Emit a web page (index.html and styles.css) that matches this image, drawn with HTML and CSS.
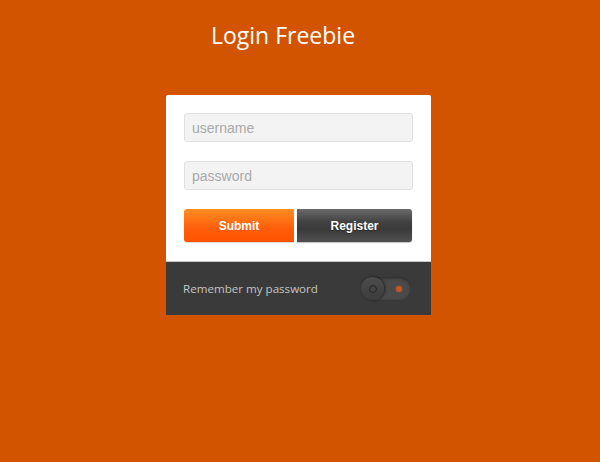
FILE: index.html
```html
<!DOCTYPE html>
<html lang="en">
<head>
  <meta charset="UTF-8" />
  <meta name="viewport" content="width=device-width, initial-scale=1.0"/>
  <title>Login Freebie</title>
  <link rel="stylesheet" href="styles.css">
</head>
<body>
  <div class="page">
    <h1 class="title">Login Freebie</h1>

    <div class="login-card">
      <form class="login-form">
        <input class="field" type="text" placeholder="username">
        <input class="field" type="password" placeholder="password">
        <div class="actions">
          <button type="button" class="btn btn-submit">Submit</button>
          <button type="button" class="btn btn-register">Register</button>
        </div>
      </form>

      <!-- Remember row -->
      <div class="remember">
        <span class="remember-label">Remember my password</span>
        <div class="toggle">
          <span class="toggle-knob"><span class="knob-dot"></span></span>
          <span class="toggle-led"></span>
        </div>
      </div>
    </div>
  </div>
</body>
</html>
```

FILE: styles.css
```css
body {
  margin: 0;
  padding: 0;
  background: #d35400;
  font-family: 'Open Sans', 'Liberation Sans', sans-serif;
  min-height: 462px;
}

.page {
  padding-top: 20px;
}

.title {
  margin: 0;
  text-align: center;
  padding-right: 34px;
  font-size: 23px;
  font-weight: normal;
  color: #fff;
  line-height: 30px;
}

.login-card {
  width: 265px;
  margin: 45px 0 0 166px;
  background: #fff;
  border-radius: 2px 2px 0 0;
  overflow: hidden;
}

.login-form {
  padding: 18px 18px 19px 18px;
  display: flex;
  flex-direction: column;
  gap: 19px;
  border-bottom: 1px solid #c9c9c9;
}

.field {
  box-sizing: border-box;
  width: 229px;
  height: 29px;
  margin: 0;
  padding: 0 7px;
  background: #f3f3f3;
  border: 1px solid #e0e0e0;
  border-radius: 3px;
  font-family: 'Liberation Sans', Arial, sans-serif;
  font-size: 14px;
  color: #555;
  outline: none;
}

.field::placeholder {
  color: #a9a9a9;
}

.actions {
  display: flex;
  gap: 3px;
}

.btn {
  height: 33px;
  border: none;
  padding: 0;
  font-family: 'Liberation Sans', Arial, sans-serif;
  font-size: 12px;
  font-weight: bold;
  color: #fff;
  cursor: pointer;
}

.btn-submit {
  width: 110px;
  border-radius: 3px 0 0 3px;
  background: linear-gradient(to bottom, #ff8d22, #ff5d0a 60%, #ff5200);
  box-shadow: 0 1px 1px rgba(0,0,0,0.15);
}

.btn-register {
  width: 115px;
  border-radius: 0 3px 3px 0;
  background: linear-gradient(to bottom, #6a6a6a, #414141 40%, #3a3a3a 60%, #505050);
  box-shadow: 0 1px 1px rgba(0,0,0,0.25);
  text-shadow: 0 1px 1px rgba(0,0,0,0.4);
}

.remember {
  height: 53px;
  background: #3a3a3a;
  display: flex;
  align-items: center;
  justify-content: space-between;
  padding: 0 20px 0 17px;
}

.remember-label {
  font-size: 11.6px;
  color: #c4c4c4;
}

.toggle {
  position: relative;
  width: 50px;
  height: 23px;
  border-radius: 12px;
  background: #4a4a4a;
  box-shadow: inset 0 1px 3px rgba(0,0,0,0.5);
  display: flex;
  align-items: center;
  justify-content: space-between;
  padding-right: 9px;
  box-sizing: border-box;
}

.toggle-knob {
  width: 23px;
  height: 23px;
  border-radius: 50%;
  background: linear-gradient(to bottom, #4c4c4c, #3c3c3c);
  box-shadow: 1px 0 3px rgba(0,0,0,0.6);
  display: flex;
  align-items: center;
  justify-content: center;
}

.knob-dot {
  width: 6px;
  height: 6px;
  border-radius: 50%;
  border: 1px solid #262626;
  background: #444;
}

.toggle-led {
  width: 6px;
  height: 6px;
  border-radius: 50%;
  background: #c2561f;
  box-shadow: 0 0 2px rgba(230,90,30,0.6);
}
```
